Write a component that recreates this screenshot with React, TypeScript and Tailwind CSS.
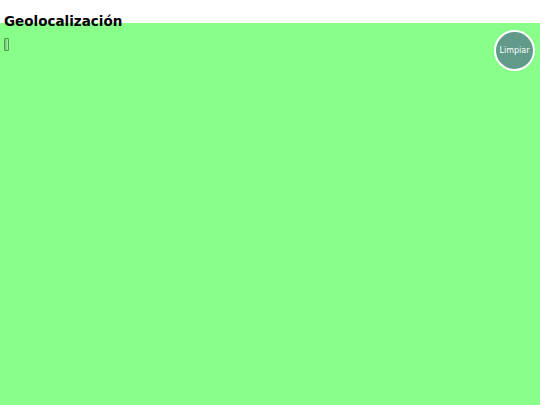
export default function App() {
  return (
    <div className="w-[540px] h-[405px] bg-white overflow-hidden flex flex-col" style={{ fontFamily: '"DejaVu Sans", sans-serif' }}>
      <div className="relative z-10 h-[23px] shrink-0 pt-[13px] pl-[4px] text-[13.5px] leading-[16px] font-bold text-black whitespace-nowrap">
        Geolocalización
      </div>
      <div className="relative flex-1 bg-[#88ff88]">
        <div className="absolute left-[4px] top-[15px] w-[5px] h-[13px] border border-[#4f9a4f] bg-gradient-to-r from-[#6cc86c] to-[#a8f0a8] rounded-[1px]" />
        <button className="absolute right-[5px] top-[7px] w-[41px] h-[41px] rounded-full bg-[#619a8a] border-2 border-white text-white text-[8px] flex items-center justify-center" style={{ fontFamily: '"DejaVu Sans", sans-serif' }}>
          Limpiar
        </button>
      </div>
    </div>
  );
}
